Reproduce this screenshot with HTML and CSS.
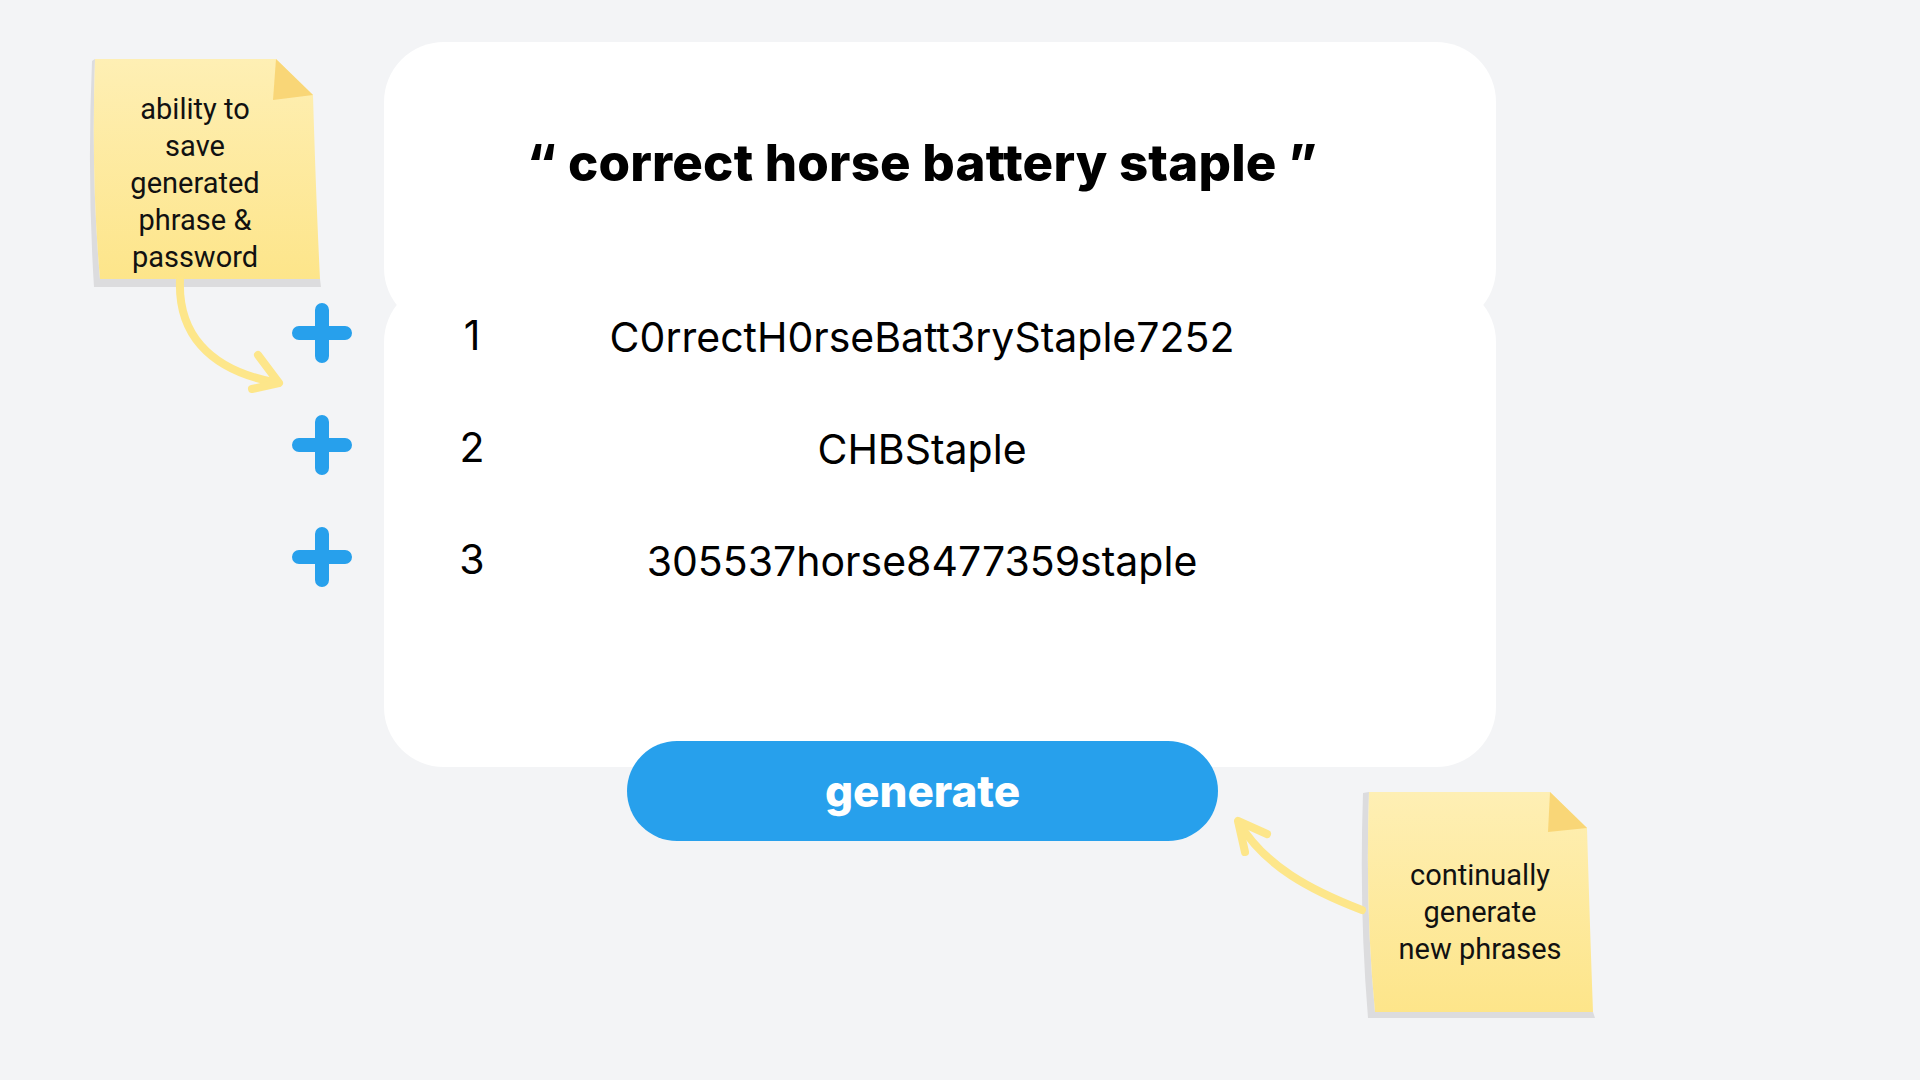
FILE: index.html
```html
<!DOCTYPE html>
<html lang="en">
<head>
<meta charset="utf-8">
<title>Passphrase generator</title>
<link rel="stylesheet" href="styles.css">
</head>
<body>
<main class="board">
  <section class="card">
    <div class="card-top">
      <h1 class="phrase">“ correct horse battery staple ”</h1>
    </div>
    <div class="card-bottom">
      <ol class="results">
        <li class="result">
          <button class="save" aria-label="save"><svg viewBox="0 0 62 62" width="62" height="62"><path d="M31 8V54M8 31H54" /></svg></button>
          <span class="num">1</span>
          <span class="pw">C0rrectH0rseBatt3ryStaple7252</span>
        </li>
        <li class="result">
          <button class="save" aria-label="save"><svg viewBox="0 0 62 62" width="62" height="62"><path d="M31 8V54M8 31H54" /></svg></button>
          <span class="num">2</span>
          <span class="pw">CHBStaple</span>
        </li>
        <li class="result">
          <button class="save" aria-label="save"><svg viewBox="0 0 62 62" width="62" height="62"><path d="M31 8V54M8 31H54" /></svg></button>
          <span class="num">3</span>
          <span class="pw">305537horse8477359staple</span>
        </li>
      </ol>
    </div>
  </section>
  <div class="actions">
    <button class="generate">generate</button>
  </div>
</main>

<aside class="note note-save">
  <svg class="note-bg" viewBox="0 0 236 232" width="236" height="232">
    <defs>
      <linearGradient id="ng1" x1="0" y1="0" x2="0" y2="1">
        <stop offset="0" stop-color="#feefb4"/>
        <stop offset="1" stop-color="#fde58a"/>
      </linearGradient>
    </defs>
    <path class="note-shadow" d="M4 3 Q-1 120 6 229 L233 229 L232 221 L12 221 Q3 120 7 1 Z"/>
    <path d="M7 1 L188 1 L225 37 Q228 140 232 221 L12 221 Q3 120 7 1 Z" fill="url(#ng1)"/>
    <path class="note-fold" d="M188 1 L225 37 L185 42 Z"/>
  </svg>
  <p class="note-text">ability to<br>save<br>generated<br>phrase &amp;<br>password</p>
</aside>

<aside class="note note-gen">
  <svg class="note-bg" viewBox="0 0 238 232" width="238" height="232">
    <defs>
      <linearGradient id="ng2" x1="0" y1="0" x2="0" y2="1">
        <stop offset="0" stop-color="#feefb4"/>
        <stop offset="1" stop-color="#fde58a"/>
      </linearGradient>
    </defs>
    <path class="note-shadow" d="M3 3 Q-1 120 8 228 L235 228 L233 222 L15 222 Q5 120 9 2 Z"/>
    <path d="M9 2 L190 2 L227 38 Q230 140 233 222 L15 222 Q5 120 9 2 Z" fill="url(#ng2)"/>
    <path class="note-fold" d="M190 2 L227 38 L188 42 Z"/>
  </svg>
  <p class="note-text">continually<br>generate<br>new phrases</p>
</aside>

<svg class="arrows" viewBox="0 0 1920 1080" width="1920" height="1080" aria-hidden="true">
  <path d="M180 280 C178 330 205 370 278 383"/>
  <path d="M258 355 L279 383 L252 389"/>
  <path d="M1362 910 C1310 890 1265 866 1239 823"/>
  <path d="M1267 834 L1238 821 L1245 852"/>
</svg>
</body>
</html>
```
FILE: styles.css
```css
* { box-sizing: border-box; }

html, body {
  margin: 0;
  padding: 0;
}

body {
  width: 1920px;
  height: 1080px;
  overflow: hidden;
  position: relative;
  background: #f3f4f6;
  font-family: "Inter", "Liberation Sans", sans-serif;
  color: #000;
}

.board {
  padding: 42px 0 0 384px;
}

.card {
  width: 1112px;
}

.card-top {
  height: 286px;
  background: #fff;
  border-radius: 60px;
  display: flex;
  justify-content: center;
  padding: 91px 36px 0 0;
}

.phrase {
  margin: 0;
  font-family: "Inter", "Liberation Sans", sans-serif;
  font-weight: 800;
  font-size: 51px;
  line-height: 60px;
  letter-spacing: 0.2px;
  white-space: nowrap;
}

.card-bottom {
  display: flow-root;
  margin-top: -46px;
  height: 485px;
  background: #fff;
  border-radius: 60px;
}

.results {
  list-style: none;
  margin: -5px 0 0;
  padding: 0;
}

.result {
  display: grid;
  grid-template-columns: 62px 149px 840px;
  align-items: center;
  height: 112px;
  margin-left: -93px;
}

.save {
  width: 62px;
  height: 62px;
  padding: 0;
  border: 0;
  background: none;
  display: block;
}

.save svg {
  display: block;
  fill: none;
  stroke: #27a0ec;
  stroke-width: 14;
  stroke-linecap: round;
}

.num {
  padding-left: 89px;
  text-align: center;
  font-size: 41px;
  line-height: 50px;
  position: relative;
  top: 2px;
}

.pw {
  text-align: center;
  font-size: 41px;
  line-height: 50px;
  white-space: nowrap;
  position: relative;
  top: 4px;
}

.actions {
  margin-top: -26px;
  padding-left: 243px;
  display: flex;
}

.generate {
  width: 591px;
  height: 100px;
  border: 0;
  border-radius: 50px;
  background: #27a0ec;
  color: #fff;
  font-family: "Inter", "Liberation Sans", sans-serif;
  font-weight: 800;
  font-size: 44px;
  line-height: 100px;
  padding: 0;
}

.note {
  position: absolute;
  width: 236px;
  height: 232px;
  margin: 0;
}

.note-save {
  left: 88px;
  top: 58px;
}

.note-gen {
  left: 1360px;
  top: 790px;
}

.note-bg {
  position: absolute;
  left: 0;
  top: 0;
}

.note-shadow { fill: #dcdcde; }
.note-fold { fill: #f9d677; }

.note-text {
  position: relative;
  margin: 0;
  text-align: center;
  font-family: "Roboto", "Liberation Sans", sans-serif;
  font-size: 29px;
  line-height: 37px;
  color: #111;
}

.note-save .note-text {
  padding: 33px 22px 0 0;
}

.note-gen .note-text {
  padding: 67px 0 0 4px;
}

.arrows {
  position: absolute;
  left: 0;
  top: 0;
  pointer-events: none;
  fill: none;
  stroke: #fde68a;
  stroke-width: 8;
  stroke-linecap: round;
  stroke-linejoin: round;
}
```
